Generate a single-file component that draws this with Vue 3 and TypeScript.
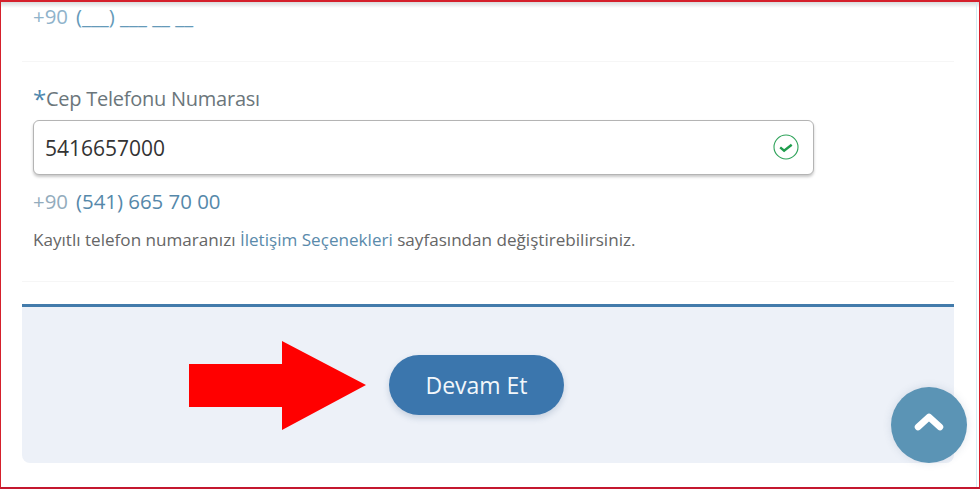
<script setup lang="ts">
import { ref } from "vue";

const phone = ref("5416657000");
const emptyMask = "(___) ___ __ __";
const filledMask = "(541) 665 70 00";
</script>

<template>
  <div class="frame">
    <main class="form">
      <section class="row row--top">
        <div class="mask">
          <span class="mask__code">+90</span>
          <span class="mask__value">{{ emptyMask }}</span>
        </div>
      </section>

      <section class="row row--phone">
        <label class="label" for="phone"><span class="label__req">*</span>Cep Telefonu Numarası</label>
        <div class="field">
          <input id="phone" v-model="phone" class="field__input" type="text" />
          <svg class="field__ok" width="26" height="26" viewBox="0 0 26 26" aria-hidden="true">
            <circle cx="13" cy="13" r="12" fill="none" stroke="#2fa35a" stroke-width="1.1" />
            <path d="M7.2 13.4l3.9 3.3 7.6-6" fill="none" stroke="#1f9d4d" stroke-width="2.4" />
          </svg>
        </div>
        <div class="mask mask--filled">
          <span class="mask__code">+90</span>
          <span class="mask__value">{{ filledMask }}</span>
        </div>
        <p class="note">
          Kayıtlı telefon numaranızı <a href="#" class="note__link">İletişim Seçenekleri</a> sayfasından değiştirebilirsiniz.
        </p>
      </section>

      <footer class="actions">
        <svg class="arrow" width="177" height="89" viewBox="0 0 177 89" aria-hidden="true">
          <polygon points="0,23 93,23 93,0 177,44 93,89 93,66 0,66" fill="#ff0000" />
        </svg>
        <button class="next" type="button">Devam Et</button>
      </footer>
    </main>

    <button class="to-top" type="button" aria-label="Yukarı">
      <svg width="30" height="20" viewBox="0 0 30 20" aria-hidden="true">
        <path d="M4 15L15 5l11 10" fill="none" stroke="#fff" stroke-width="6.5" stroke-linecap="round" stroke-linejoin="round" />
      </svg>
    </button>
  </div>
</template>

<style>
html,
body {
  margin: 0;
  background: #fff;
  overflow: hidden;
}
</style>

<style scoped>
.frame {
  position: relative;
  box-sizing: border-box;
  width: 980px;
  height: 489px;
  overflow: hidden;
  padding: 0 25px 0 21px;
  border-top: 2px solid #d5202c;
  border-left: 1px solid #d5202c;
  border-right: 1px solid #d5202c;
  border-bottom: 2px solid #c4182f;
  font-family: "Open Sans", "Liberation Sans", sans-serif;
  background: #fff;
}
.frame::before {
  content: "";
  position: absolute;
  left: 0;
  right: 0;
  top: 0;
  height: 6px;
  background: linear-gradient(#d9dbdc, #fff);
}
.frame::after {
  content: "";
  position: absolute;
  right: 2px;
  top: 0;
  bottom: 0;
  width: 1px;
  background: #d3ecf3;
}
.form {
  position: relative;
  z-index: 1;
}
.row {
  padding-left: 11px;
  border-bottom: 1px solid #f6f6f6;
}
.row--top {
  height: 60px;
  box-sizing: border-box;
}
.row--phone {
  height: 220px;
  box-sizing: border-box;
  padding-top: 22px;
}
.mask {
  display: flex;
  gap: 8px;
  font-size: 20.4px;
  line-height: 28px;
  color: #659ab9;
}
.mask__code {
  color: #8fb3cb;
}
.mask--filled {
  margin-top: 12px;
  color: #5588aa;
}
.mask--filled .mask__code {
  color: #93acbd;
}
.label {
  display: block;
  font-size: 20px;
  letter-spacing: -0.25px;
  line-height: 30px;
  color: #6b767b;
}
.label__req {
  display: inline-block;
  width: 13px;
  font-size: 24px;
  line-height: 20px;
  vertical-align: -2px;
  color: #4c86ad;
}
.field {
  position: relative;
  width: 781px;
  margin-top: 6px;
}
.field__input {
  display: block;
  box-sizing: border-box;
  width: 100%;
  height: 55px;
  padding: 0 60px 0 11px;
  border: 1px solid #b4b4b4;
  border-radius: 6px;
  box-shadow: 0 2px 3px rgba(0, 0, 0, 0.22);
  font: inherit;
  font-size: 21px;
  color: #333;
  outline: none;
  background: #fff;
}
.field__ok {
  position: absolute;
  right: 15px;
  top: 14px;
}
.note {
  margin: 13px 0 0;
  font-size: 17.1px;
  line-height: 24px;
  color: #666;
}
.note__link {
  color: #5a8aab;
  text-decoration: none;
}
.actions {
  display: flex;
  align-items: center;
  gap: 23px;
  box-sizing: border-box;
  height: 159px;
  margin-top: 22px;
  padding-left: 167px;
  border-top: 3px solid #437bab;
  border-radius: 0 0 8px 8px;
  background: #edf1f8;
}
.arrow {
  flex: none;
}
.next {
  width: 175px;
  height: 60px;
  border: 0;
  border-radius: 30px;
  background: #3b76ad;
  box-shadow: 0 3px 6px rgba(60, 90, 130, 0.22);
  color: #f2f7fb;
  font: inherit;
  font-size: 23px;
  cursor: pointer;
}
.to-top {
  position: absolute;
  z-index: 2;
  left: 890px;
  top: 385px;
  display: flex;
  align-items: center;
  justify-content: center;
  width: 76px;
  height: 76px;
  padding: 0 0 6px;
  border: 0;
  border-radius: 50%;
  background: #5b94b5;
  box-shadow: 0 0 8px rgba(60, 90, 120, 0.15);
  cursor: pointer;
}
</style>
